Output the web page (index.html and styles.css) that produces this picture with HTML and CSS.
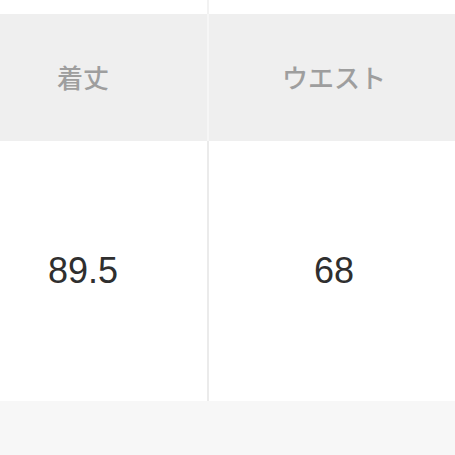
FILE: index.html
```html
<!DOCTYPE html>
<html lang="ja">
<head>
<meta charset="utf-8">
<link rel="stylesheet" href="styles.css">
</head>
<body>
<div class="page">
  <div class="top">
    <div class="cell top-cell"></div>
    <div class="cell top-cell"></div>
  </div>
  <div class="row head">
    <div class="cell hcell">着丈</div>
    <div class="cell hcell">ウエスト</div>
  </div>
  <div class="row data">
    <div class="cell dcell">89.5</div>
    <div class="cell dcell">68</div>
  </div>
  <div class="foot"></div>
</div>
</body>
</html>
```
FILE: styles.css
```css
html, body {
  margin: 0;
  padding: 0;
  background: #ffffff;
  overflow: hidden;
}
.page {
  width: 455px;
  height: 455px;
  overflow: hidden;
  display: flex;
  flex-direction: column;
}
.top, .row {
  display: flex;
  margin-left: -41px;
}
.top {
  height: 14px;
}
.cell {
  flex: 0 0 250px;
  display: flex;
  align-items: center;
  justify-content: center;
  box-sizing: border-box;
}
.cell:first-child {
  border-right: 2px solid #f2f2f2;
}
.head {
  height: 127px;
  background: #efefef;
}
.head .cell:first-child {
  border-right-color: #f6f6f6;
}
.hcell {
  font-family: "Noto Sans CJK JP", "Noto Sans", sans-serif;
  font-size: 26px;
  font-weight: 500;
  color: #9e9e9e;
  padding-bottom: 3px;
}
.data {
  height: 260px;
  background: #ffffff;
}
.data .cell:first-child {
  border-right-color: #ebebeb;
}
.dcell {
  font-family: "Liberation Sans", Arial, sans-serif;
  font-size: 36px;
  color: #2f2f2f;
}
.foot {
  flex: 1;
  background: #f7f7f7;
}
```
